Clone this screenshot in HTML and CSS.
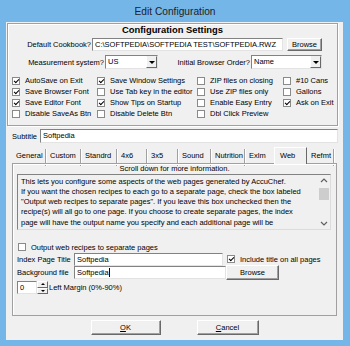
FILE: index.html
```html
<!DOCTYPE html>
<html lang="en">
<head>
    <meta charset="utf-8" />
    <title>Edit Configuration</title>
    <link rel="stylesheet" href="styles.css">
</head>
<body>
<div class="window">
    <div class="titlebar">Edit Configuration</div>

    <div class="client">
        <!-- General settings box -->
        <div class="settings">
            <h1>Configuration Settings</h1>

            <div class="row cookbook">
                <label class="lbl-cookbook">Default Cookbook?</label>
                <div class="edit path">C:\SOFTPEDIA\SOFTPEDIA TEST\SOFTPEDIA.RWZ</div>
                <button class="btn browse-top">Browse</button>
            </div>

            <div class="row measure">
                <label class="lbl-measure">Measurement system?</label>
                <div class="combo units"><span>US</span><i class="drop"></i></div>
                <label class="lbl-order">Initial Browser Order?</label>
                <div class="combo order"><span>Name</span><i class="drop"></i></div>
            </div>

            <div class="checks">
                <div class="check"><span class="cb on"></span>AutoSave on Exit</div>
                <div class="check"><span class="cb on"></span>Save Window Settings</div>
                <div class="check"><span class="cb"></span>ZIP files on closing</div>
                <div class="check"><span class="cb"></span>#10 Cans</div>

                <div class="check"><span class="cb on"></span>Save Browser Font</div>
                <div class="check"><span class="cb"></span>Use Tab key in the editor</div>
                <div class="check"><span class="cb"></span>Use ZIP files only</div>
                <div class="check"><span class="cb"></span>Gallons</div>

                <div class="check"><span class="cb on"></span>Save Editor Font</div>
                <div class="check"><span class="cb on"></span>Show Tips on Startup</div>
                <div class="check"><span class="cb"></span>Enable Easy Entry</div>
                <div class="check"><span class="cb on"></span>Ask on Exit</div>

                <div class="check"><span class="cb"></span>Disable SaveAs Btn</div>
                <div class="check"><span class="cb"></span>Disable Delete Btn</div>
                <div class="check"><span class="cb"></span>Dbl Click Preview</div>
            </div>
        </div>

        <div class="row subtitle">
            <label>Subtitle</label>
            <div class="edit">Softpedia</div>
        </div>

        <!-- Tab strip -->
        <div class="tabs">
            <div class="tab">General</div>
            <div class="tab">Custom</div>
            <div class="tab">Standrd</div>
            <div class="tab">4x6</div>
            <div class="tab">3x5</div>
            <div class="tab">Sound</div>
            <div class="tab">Nutrition</div>
            <div class="tab plain">Exlm</div>
            <div class="tab active">Web</div>
            <div class="tab">Refmt</div>
        </div>

        <div class="panel">
            <div class="note">Scroll down for more information.</div>

            <div class="memo">
                <div class="memo-text">This lets you configure some aspects of the web pages generated by AccuChef.<br>If you want the chosen recipes to each go to a separate page, check the box labeled<br>"Output web recipes to separate pages".  If you leave this box unchecked then the<br>recipe(s) will all go to one page.  If you choose to create separate  pages, the index<br>page will have the output name you specify and each additional page will be</div>
                <div class="scroll">
                    <svg class="arrow" width="12" height="12" viewBox="0 0 12 12"><polyline points="3,7 6,4 9,7" fill="none" stroke="#606060" stroke-width="1.2"/></svg>
                    <div class="thumb"></div>
                    <svg class="arrow" width="12" height="12" viewBox="0 0 12 12"><polyline points="3,5 6,8 9,5" fill="none" stroke="#606060" stroke-width="1.2"/></svg>
                </div>
            </div>

            <div class="check web-check"><span class="cb"></span>Output web recipes to separate pages</div>

            <div class="row field index-row">
                <label>Index Page Title</label>
                <div class="edit title-edit">Softpedia</div>
                <div class="check include"><span class="cb on"></span>Include title on all pages</div>
            </div>

            <div class="row field bg-row">
                <label>Background file</label>
                <div class="edit bg-edit">Softpedia<span class="caret"></span></div>
                <button class="btn browse-bottom">Browse</button>
            </div>

            <div class="row spin-row">
                <div class="edit spin-edit">0</div>
                <div class="spin">
                    <span class="spin-up"></span>
                    <span class="spin-down"></span>
                </div>
                <span class="spin-label">Left Margin (0%-90%)</span>
            </div>
        </div>

        <div class="actions">
            <button class="btn ok"><u>O</u>K</button>
            <button class="btn cancel"><u>C</u>ancel</button>
        </div>
    </div>
</div>
</body>
</html>
```

FILE: styles.css
```css
* {
    box-sizing: border-box;
}

body {
    margin: 0;
    background: #75b6e9;
    font-family: "Liberation Sans", Arial, sans-serif;
    font-size: 7.5px;
    color: #000;
}

.window {
    width: 350px;
    height: 346px;
    display: flex;
    flex-direction: column;
}

.titlebar {
    height: 22px;
    line-height: 23px;
    text-align: center;
    font-size: 10.2px;
    color: #222;
}

.client {
    flex: 1;
    margin: 0 7px 6px 6px;
    background: #f0f0f0;
    display: flex;
    flex-direction: column;
}

/* settings group */
.settings {
    height: 103px;
    margin: 1px 5px 0 1px;
    border: 1px solid #a0a0a0;
    box-shadow: inset 1px 1px #fff, 1px 1px #fff;
}

.settings h1 {
    margin: 0;
    font-size: 9.4px;
    font-weight: bold;
    line-height: 12px;
    text-align: center;
}

.row {
    display: flex;
    align-items: center;
}

label {
    white-space: nowrap;
}

.edit {
    background: #fff;
    height: 13px;
    line-height: 11px;
    padding-left: 2px;
    border: 1px solid;
    border-color: #828282 #e3e3e3 #e3e3e3 #828282;
    white-space: nowrap;
    overflow: hidden;
}

.btn {
    font: inherit;
    color: #000;
    padding: 0;
    background: #f0f0f0;
    border: 1px solid;
    border-color: #fff #696969 #696969 #fff;
    box-shadow: inset -1px -1px #a0a0a0;
}

.cookbook {
    margin-top: 2px;
    height: 13px;
}

.lbl-cookbook {
    width: 84px;
    text-align: right;
    padding-right: 1px;
}

.path {
    width: 191px;
}

.browse-top {
    width: 35px;
    height: 13px;
    margin-left: 4px;
}

.measure {
    margin-top: 4px;
    height: 14px;
}

.lbl-measure {
    width: 97px;
    text-align: right;
    padding-right: 1px;
}

.lbl-order {
    width: 93px;
    text-align: right;
    padding-right: 1px;
}

.combo {
    display: flex;
    height: 14px;
    background: #fff;
    border: 1px solid;
    border-color: #828282 #e3e3e3 #e3e3e3 #828282;
}

.combo span {
    flex: 1;
    padding-left: 2px;
    line-height: 12px;
}

.drop {
    width: 11px;
    height: 12px;
    display: flex;
    align-items: center;
    justify-content: center;
    background: #f0f0f0;
    border: 1px solid;
    border-color: #f0f0f0 #696969 #696969 #fff;
}

.drop::after {
    content: "";
    border-left: 3px solid transparent;
    border-right: 3px solid transparent;
    border-top: 3px solid #000;
}

.units {
    width: 53px;
}

.order {
    width: 71px;
}

/* check boxes */
.checks {
    display: grid;
    grid-template-columns: 85px 100px 86px 1fr;
    margin-top: 6px;
    padding-left: 4px;
    line-height: 11px;
}

.check {
    display: flex;
    align-items: center;
    white-space: nowrap;
    line-height: 11px;
}

.cb {
    position: relative;
    flex: none;
    width: 8px;
    height: 8px;
    margin-right: 5px;
    background: #fff;
    border: 1px solid #8a8a8a;
}

.cb.on::after {
    content: "";
    position: absolute;
    left: 2px;
    top: 0;
    width: 2px;
    height: 4px;
    border: solid #000;
    border-width: 0 1.5px 1.5px 0;
    transform: rotate(45deg);
}

.subtitle {
    margin: 3px 0 0 6px;
    height: 14px;
}

.subtitle label {
    width: 28px;
}

.subtitle .edit {
    width: 298px;
    height: 14px;
    line-height: 12px;
}

/* tabs */
.tabs {
    display: grid;
    grid-template-columns: 34px 35px 36px 30px 31px 33px 34px 29px 33px 27px;
    margin: 6px 0 0 6px;
    height: 14px;
}

.tab {
    line-height: 14px;
    padding-left: 4px;
    white-space: nowrap;
    border-right: 1px solid #a0a0a0;
    box-shadow: 1px 0 #fff;
}

.tab.plain {
    border-right: none;
    box-shadow: none;
}

.tab.active {
    position: relative;
    z-index: 1;
    top: -2px;
    height: 17px;
    line-height: 15px;
    padding-left: 5px;
    background: #f0f0f0;
    border: 1px solid;
    border-color: #fff #696969 transparent #fff;
    border-bottom: none;
    box-shadow: none;
}

.panel {
    margin-left: 6px;
    width: 325px;
    height: 153px;
    border: 1px solid #a0a0a0;
    box-shadow: inset 1px 1px #fff;
    display: flex;
    flex-direction: column;
}

.note {
    text-align: center;
    line-height: 10px;
}

.memo {
    display: flex;
    margin-left: 4px;
    width: 314px;
    height: 56px;
    border: 1px solid;
    border-color: #828282 #dcdcdc #dcdcdc #828282;
}

.memo-text {
    flex: 1;
    padding: 1.5px 0 0 3px;
    line-height: 10.3px;
    white-space: nowrap;
    overflow: hidden;
}

.scroll {
    width: 12px;
    display: flex;
    flex-direction: column;
    align-items: center;
    background: #f0f0f0;
}

.thumb {
    width: 10px;
    height: 12px;
    margin-top: 1px;
    background: #cdcdcd;
}

.scroll .arrow:last-child {
    margin-top: auto;
}

.web-check {
    margin: 11.5px 0 0 5px;
}

.field {
    margin-left: 4px;
}

.field label {
    width: 57px;
}

.index-row {
    height: 13px;
}

.title-edit {
    width: 149px;
}

.include {
    margin-left: 4px;
}

.bg-row {
    height: 15px;
    margin-top: -1px;
}

.bg-edit {
    width: 152px;
}

.caret {
    display: inline-block;
    width: 1px;
    height: 9px;
    background: #000;
    vertical-align: middle;
}

.browse-bottom {
    width: 53px;
    height: 15px;
}

.spin-row {
    margin: 1.5px 0 0 4px;
    height: 13px;
}

.spin-edit {
    width: 20px;
}

.spin {
    width: 11px;
    height: 13px;
    display: flex;
    flex-direction: column;
}

.spin span {
    flex: 1;
    display: flex;
    align-items: center;
    justify-content: center;
    border: 1px solid;
    border-color: #fff #696969 #696969 #fff;
}

.spin-up::after {
    content: "";
    border-left: 2px solid transparent;
    border-right: 2px solid transparent;
    border-bottom: 2px solid #000;
}

.spin-down::after {
    content: "";
    border-left: 2px solid transparent;
    border-right: 2px solid transparent;
    border-top: 2px solid #000;
}

.spin-label {
    margin-left: 1px;
}

.actions {
    display: flex;
    justify-content: center;
    gap: 36px;
    margin-top: 4px;
}

.actions .btn {
    height: 15px;
}

.ok {
    width: 70px;
}

.cancel {
    width: 62px;
}
```
